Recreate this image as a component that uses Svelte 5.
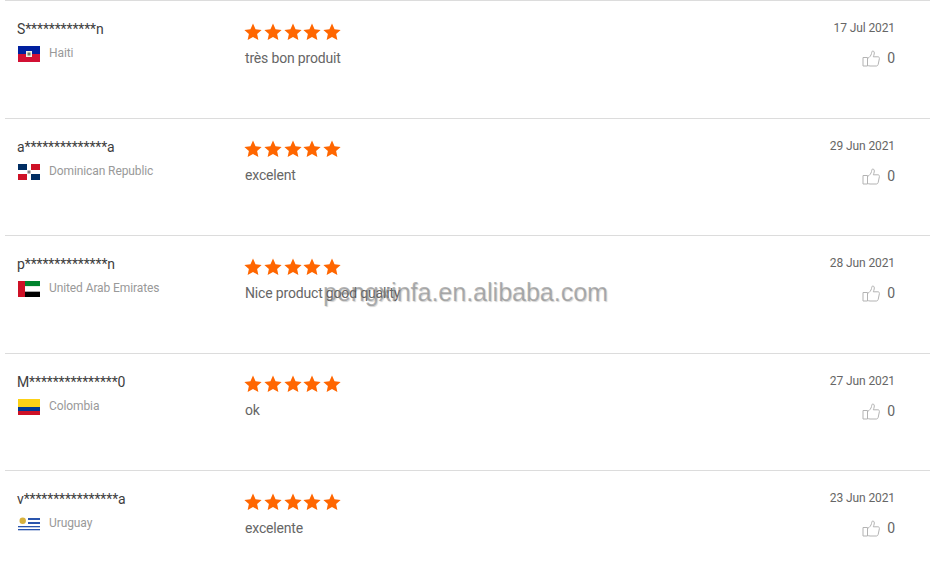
<script lang="ts">
	const reviews = [
		{ name: 'S************n', country: 'Haiti', flag: 'ht', text: 'très bon produit', date: '17 Jul 2021' },
		{ name: 'a**************a', country: 'Dominican Republic', flag: 'do', text: 'excelent', date: '29 Jun 2021' },
		{ name: 'p**************n', country: 'United Arab Emirates', flag: 'ae', text: 'Nice product good quality', date: '28 Jun 2021' },
		{ name: 'M***************0', country: 'Colombia', flag: 'co', text: 'ok', date: '27 Jun 2021' },
		{ name: 'v****************a', country: 'Uruguay', flag: 'uy', text: 'excelente', date: '23 Jun 2021' }
	];
	const stars = [0, 1, 2, 3, 4];
</script>

{#snippet flag(code: string)}
	<svg class="flag" viewBox="0 0 22 16" aria-hidden="true">
		{#if code === 'ht'}
			<rect width="22" height="8" fill="#00209f" />
			<rect y="8" width="22" height="8" fill="#d21034" />
			<rect x="8" y="5" width="6" height="6" fill="#f1f1e6" />
			<rect x="9.5" y="6.5" width="3" height="3" fill="#6b7a5e" />
		{:else if code === 'do'}
			<rect width="22" height="16" fill="#fff" />
			<rect width="9" height="6" fill="#002d62" />
			<rect x="13" width="9" height="6" fill="#ce1126" />
			<rect y="10" width="9" height="6" fill="#ce1126" />
			<rect x="13" y="10" width="9" height="6" fill="#002d62" />
			<rect x="9.5" y="6.5" width="3" height="3" fill="#7d7d7d" />
		{:else if code === 'ae'}
			<rect width="22" height="5.33" fill="#00842d" />
			<rect y="5.33" width="22" height="5.33" fill="#fff" />
			<rect y="10.66" width="22" height="5.34" fill="#000" />
			<rect width="7" height="16" fill="#ce1126" />
		{:else if code === 'co'}
			<rect width="22" height="8" fill="#fcd116" />
			<rect y="8" width="22" height="4" fill="#003893" />
			<rect y="12" width="22" height="4" fill="#ce1126" />
		{:else if code === 'uy'}
			<rect x="10" y="2" width="12" height="2" fill="#2a55ad" />
			<rect x="10" y="6" width="12" height="2" fill="#2a55ad" />
			<rect y="10" width="22" height="1.3" fill="#2a55ad" />
			<rect y="13" width="22" height="1.3" fill="#2a55ad" />
			<circle cx="4.7" cy="4.8" r="3.2" fill="#d9b23c" />
		{/if}
	</svg>
{/snippet}

<div class="list">
	{#each reviews as r}
		<div class="row">
			<div class="buyer">
				<div class="name">{r.name}</div>
				<div class="place">
					{@render flag(r.flag)}
					<span>{r.country}</span>
				</div>
			</div>
			<div class="body">
				<div class="stars">
					{#each stars as s (s)}
						<svg class="star" viewBox="0 0 20 20" aria-hidden="true">
							<path d="M10 1.6l2.55 5.6 6.1.7-4.53 4.13 1.24 6.02L10 15l-5.36 3.05 1.24-6.02L1.35 7.9l6.1-.7z" fill="#ff6600" />
						</svg>
					{/each}
				</div>
				<div class="text">{r.text}</div>
			</div>
			<div class="meta">
				<div class="date">{r.date}</div>
				<div class="likes">
					<svg class="thumb" viewBox="0 0 18 17" aria-hidden="true">
						<path d="M5.5 7.5H1v8.5h4.5zM5.5 8.5c2-1 3.6-3 4-5 .2-1 .3-2.6 1.4-2.5 1.3.1 1.6 1.6 1.3 3-.2 1-.6 2-.9 2.8h4.6c1 0 1.7.8 1.5 1.8l-1.2 5.8c-.2.9-.9 1.6-1.9 1.6H8c-1 0-1.8-.3-2.5-.8" fill="none" stroke="#b3b3b3" stroke-width="1" />
					</svg>
					<span>0</span>
				</div>
			</div>
		</div>
	{/each}
	<div class="watermark">pengxinfa.en.alibaba.com</div>
</div>

<style>
	:global(body) {
		margin: 0;
		background: #fff;
	}

	.list {
		position: relative;
		width: 930px;
		height: 586px;
		overflow: hidden;
		font-family: Roboto, 'Liberation Sans', sans-serif;
	}

	.row {
		display: grid;
		grid-template-columns: 227px 1fr auto;
		box-sizing: border-box;
		height: 117.5px;
		margin-left: 5px;
		padding: 19px 35px 0 12px;
		border-top: 1px solid #dcdcdc;
	}

	.name {
		font-size: 14px;
		line-height: 18px;
		color: #3d3d3d;
		letter-spacing: -0.13px;
	}

	.place {
		display: flex;
		align-items: flex-start;
		gap: 8px;
		margin-top: 8px;
		font-size: 12px;
		line-height: 14px;
		color: #999;
		padding-left: 1px;
		letter-spacing: -0.1px;
	}

	.place span {
		margin-left: 1px;
	}

	.flag {
		display: block;
		width: 22px;
		height: 16px;
	}

	.stars {
		display: flex;
		margin: 1.5px 0 0 -1px;
	}

	.star {
		display: block;
		width: 20px;
		height: 20px;
		margin-right: -0.25px;
	}

	.text {
		margin-top: 7px;
		padding-left: 1px;
		font-size: 14px;
		line-height: 18px;
		color: #666;
		letter-spacing: -0.17px;
	}

	.meta {
		text-align: right;
	}

	.date {
		font-size: 12px;
		line-height: 16px;
		color: #666;
		letter-spacing: -0.1px;
	}

	.likes {
		display: flex;
		justify-content: flex-end;
		align-items: center;
		gap: 7px;
		margin-top: 13.4px;
		font-size: 14px;
		line-height: 18px;
		color: #666;
	}

	.thumb {
		display: block;
		width: 18px;
		height: 17px;
		margin-top: 1px;
	}

	.watermark {
		position: absolute;
		left: 323px;
		top: 277px;
		font-family: 'Liberation Sans', Arial, sans-serif;
		font-size: 25px;
		line-height: 30px;
		color: rgba(130, 130, 130, 0.6);
		text-shadow: 1px 1px 1px rgba(0, 0, 0, 0.18);
		white-space: nowrap;
	}
</style>
